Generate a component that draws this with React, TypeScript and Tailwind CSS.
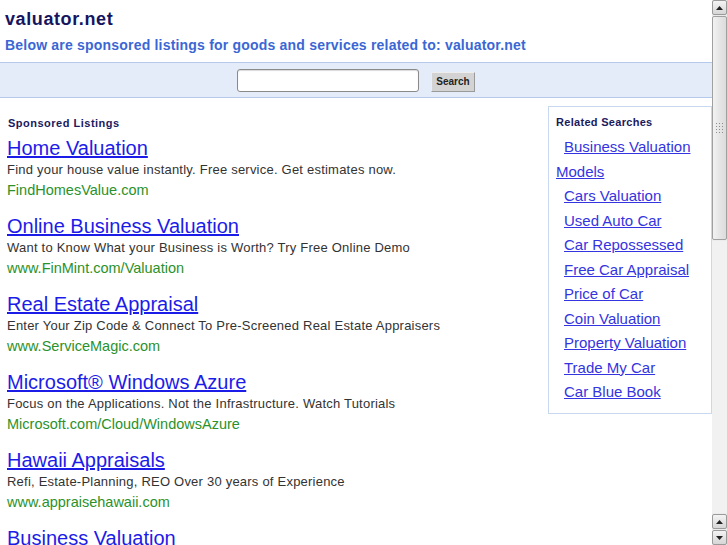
import React from 'react';

const listings = [
  {
    title: 'Home Valuation',
    desc: 'Find your house value instantly. Free service. Get estimates now.',
    url: 'FindHomesValue.com',
  },
  {
    title: 'Online Business Valuation',
    desc: 'Want to Know What your Business is Worth? Try Free Online Demo',
    url: 'www.FinMint.com/Valuation',
  },
  {
    title: 'Real Estate Appraisal',
    desc: 'Enter Your Zip Code & Connect To Pre-Screened Real Estate Appraisers',
    url: 'www.ServiceMagic.com',
  },
  {
    title: 'Microsoft® Windows Azure',
    desc: 'Focus on the Applications. Not the Infrastructure. Watch Tutorials',
    url: 'Microsoft.com/Cloud/WindowsAzure',
  },
  {
    title: 'Hawaii Appraisals',
    desc: 'Refi, Estate-Planning, REO Over 30 years of Experience',
    url: 'www.appraisehawaii.com',
  },
  {
    title: 'Business Valuation',
    desc: 'Get a professional valuation of your business today.',
    url: 'www.BusinessValuation.com',
  },
];

const related = [
  'Business Valuation Models',
  'Cars Valuation',
  'Used Auto Car',
  'Car Repossessed',
  'Free Car Appraisal',
  'Price of Car',
  'Coin Valuation',
  'Property Valuation',
  'Trade My Car',
  'Car Blue Book',
];

function Arrow({ down }: { down?: boolean }) {
  return (
    <svg width="7" height="4" viewBox="0 0 7 4">
      <polygon points={down ? '0,0 7,0 3.5,4' : '0,4 7,4 3.5,0'} fill="#222" />
    </svg>
  );
}

function ScrollButton({ down }: { down?: boolean }) {
  return (
    <div className="flex h-[15px] items-center justify-center rounded-[2px] border border-[#9a9a9a] bg-gradient-to-b from-[#f4f4f4] to-[#d6d6d6]">
      <Arrow down={down} />
    </div>
  );
}

function Scrollbar() {
  return (
    <div className="flex w-[15px] shrink-0 flex-col gap-px bg-[#ececec]">
      <ScrollButton />
      <div className="flex h-[224px] items-center justify-center rounded-[2px] border border-[#a0a0a0] bg-gradient-to-r from-[#f2f2f2] via-[#e6e6e6] to-[#dcdcdc]">
        <div className="grid grid-cols-3 gap-[2px]">
          {Array.from({ length: 12 }).map((_, i) => (
            <div key={i} className="h-px w-px bg-[#8c8c8c]" />
          ))}
        </div>
      </div>
      <div className="flex-1 bg-[#f1f1f1]" />
      <ScrollButton />
      <ScrollButton down />
    </div>
  );
}

export default function App() {
  return (
    <div className="flex h-[545px] overflow-hidden bg-white font-['Liberation_Sans',Arial,sans-serif]">
      <div className="min-w-0 flex-1">
        <div className="px-[5px] pt-[8px]">
          <h1 className="text-[18px] font-bold leading-[22px] tracking-[0.6px] text-[#15155f]">valuator.net</h1>
          <p className="mt-[6px] text-[14px] font-bold leading-[18px] tracking-[0.2px] text-[#3a67d4]">
            Below are sponsored listings for goods and services related to: valuator.net
          </p>
        </div>

        <div className="mt-[8px] flex h-[36px] items-center justify-center gap-[12px] border-y border-[#b5c9ec] bg-[#e5ecf9]">
          <input
            type="text"
            className="h-[23px] w-[182px] rounded-[3px] border border-[#8a8a8a] bg-white shadow-[inset_0_1px_1px_rgba(0,0,0,0.15)] outline-none"
          />
          <button className="mt-[3px] h-[20px] w-[44px] border border-t-[#eeeeee] border-l-[#eeeeee] border-r-[#9a9a9a] border-b-[#9a9a9a] bg-[#d3d3d3] text-[10px] font-bold leading-none text-[#222]">
            Search
          </button>
        </div>

        <div className="flex">
          <div className="min-w-0 flex-1 pl-[7px] pt-[18px]">
            <h2 className="pl-px text-[11px] font-bold leading-[14px] tracking-[0.5px] text-[#1a1a5e]">
              Sponsored Listings
            </h2>
            <div className="mt-[6px]">
              {listings.map((l) => (
                <div key={l.title} className="mb-[14px]">
                  <a href="#" className="block text-[20px] leading-[24px] text-[#1c1ce8] underline">
                    {l.title}
                  </a>
                  <p className="text-[13px] leading-[20px] tracking-[0.22px] text-[#333]">{l.desc}</p>
                  <p className="text-[14.5px] leading-[20px] text-[#2b922b]">{l.url}</p>
                </div>
              ))}
            </div>
          </div>

          <div className="mt-[8px] w-[164px] shrink-0 self-start border border-[#c8d8f3] px-[7px] pb-[8px] pt-[8px]">
            <h2 className="text-[11px] font-bold leading-[14px] tracking-[0.3px] text-[#1a1a5e]">Related Searches</h2>
            <ul className="mt-[6px]">
              {related.map((r) => (
                <li key={r} className="indent-[8px] text-[15px] leading-[24.5px]">
                  <a href="#" className="text-[#3434e0] underline">
                    {r}
                  </a>
                </li>
              ))}
            </ul>
          </div>
        </div>
      </div>
      <Scrollbar />
    </div>
  );
}
